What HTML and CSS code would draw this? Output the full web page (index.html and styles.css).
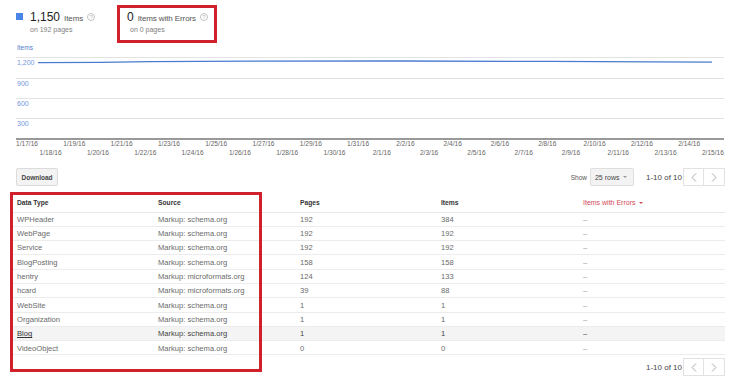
FILE: index.html
```html
<!DOCTYPE html>
<html>
<head>
<meta charset="utf-8">
<link rel="stylesheet" href="styles.css">
</head>
<body>
<div class="summary">
  <div class="stat stat-first">
    <div class="stat-row">
      <span class="swatch"></span>
      <div>
        <div class="stat-line"><span class="big">1,150</span><span class="stat-label">Items</span><span class="help">?</span></div>
        <div class="sub">on 192 pages</div>
      </div>
    </div>
  </div>
  <div class="stat stat-errors">
    <div class="stat-line"><span class="big">0</span><span class="stat-label">Items with Errors</span><span class="help">?</span></div>
    <div class="sub sub-indent">on 0 pages</div>
  </div>
</div>

<svg class="chart" width="738" height="125" viewBox="0 0 738 125">
  <text x="17" y="7" class="ytitle">Items</text>
  <g class="grid">
    <line x1="16" y1="14.5" x2="724" y2="14.5"/>
    <line x1="16" y1="35.5" x2="724" y2="35.5"/>
    <line x1="16" y1="55.5" x2="724" y2="55.5"/>
    <line x1="16" y1="75.5" x2="724" y2="75.5"/>
  </g>
  <line class="base" x1="16" y1="96" x2="724" y2="96"/>
  <g class="ylab">
    <text x="17" y="22">1,200</text>
    <text x="17" y="43">900</text>
    <text x="17" y="63">600</text>
    <text x="17" y="83">300</text>
  </g>
  <polyline class="data" points="38,19.6 100,19.4 150,18.6 250,18.1 400,18 550,18.4 650,18.9 712,19.2"/>
  <g class="xlab">
    <text x="27" y="103">1/17/16</text>
    <text x="50.6" y="112">1/18/16</text>
    <text x="74.3" y="103">1/19/16</text>
    <text x="97.9" y="112">1/20/16</text>
    <text x="121.6" y="103">1/21/16</text>
    <text x="145.3" y="112">1/22/16</text>
    <text x="168.9" y="103">1/23/16</text>
    <text x="192.6" y="112">1/24/16</text>
    <text x="216.2" y="103">1/25/16</text>
    <text x="239.9" y="112">1/26/16</text>
    <text x="263.5" y="103">1/27/16</text>
    <text x="287.2" y="112">1/28/16</text>
    <text x="310.8" y="103">1/29/16</text>
    <text x="334.5" y="112">1/30/16</text>
    <text x="358.1" y="103">1/31/16</text>
    <text x="381.8" y="112">2/1/16</text>
    <text x="405.4" y="103">2/2/16</text>
    <text x="429.1" y="112">2/3/16</text>
    <text x="452.7" y="103">2/4/16</text>
    <text x="476.4" y="112">2/5/16</text>
    <text x="500" y="103">2/6/16</text>
    <text x="523.7" y="112">2/7/16</text>
    <text x="547.3" y="103">2/8/16</text>
    <text x="571" y="112">2/9/16</text>
    <text x="594.6" y="103">2/10/16</text>
    <text x="618.3" y="112">2/11/16</text>
    <text x="641.9" y="103">2/12/16</text>
    <text x="665.6" y="112">2/13/16</text>
    <text x="689.2" y="103">2/14/16</text>
    <text x="712.9" y="112">2/15/16</text>
  </g>
</svg>

<div class="toolbar">
  <button class="btn-download">Download</button>
  <div class="pager">
    <span class="show">Show</span>
    <span class="rows">25 rows <span class="caret"></span></span>
    <span class="count">1-10 of 10</span>
    <span class="navs">
      <span class="nav"><svg width="6" height="9" viewBox="0 0 6 9"><polyline points="5,0.5 1,4.5 5,8.5"/></svg></span>
      <span class="nav"><svg width="6" height="9" viewBox="0 0 6 9"><polyline points="1,0.5 5,4.5 1,8.5"/></svg></span>
    </span>
  </div>
</div>

<div class="table-wrap">
  <table class="data-table">
    <colgroup>
      <col class="c1"><col class="c2"><col class="c3"><col class="c4"><col class="c5">
    </colgroup>
    <thead>
      <tr><th>Data Type</th><th>Source</th><th>Pages</th><th>Items</th><th class="err">Items with Errors <span class="caret red"></span></th></tr>
    </thead>
    <tbody>
      <tr><td>WPHeader</td><td>Markup: schema.org</td><td>192</td><td>384</td><td class="dash">–</td></tr>
      <tr><td>WebPage</td><td>Markup: schema.org</td><td>192</td><td>192</td><td class="dash">–</td></tr>
      <tr><td>Service</td><td>Markup: schema.org</td><td>192</td><td>192</td><td class="dash">–</td></tr>
      <tr><td>BlogPosting</td><td>Markup: schema.org</td><td>158</td><td>158</td><td class="dash">–</td></tr>
      <tr><td>hentry</td><td>Markup: microformats.org</td><td>124</td><td>133</td><td class="dash">–</td></tr>
      <tr><td>hcard</td><td>Markup: microformats.org</td><td>39</td><td>88</td><td class="dash">–</td></tr>
      <tr><td>WebSite</td><td>Markup: schema.org</td><td>1</td><td>1</td><td class="dash">–</td></tr>
      <tr><td>Organization</td><td>Markup: schema.org</td><td>1</td><td>1</td><td class="dash">–</td></tr>
      <tr class="hover"><td><span class="link">Blog</span></td><td>Markup: schema.org</td><td>1</td><td>1</td><td class="dash">–</td></tr>
      <tr><td>VideoObject</td><td>Markup: schema.org</td><td>0</td><td>0</td><td class="dash">–</td></tr>
    </tbody>
  </table>
  <div class="highlight"></div>
</div>

<div class="footer-pager">
  <span class="count">1-10 of 10</span>
  <span class="navs">
    <span class="nav"><svg width="6" height="9" viewBox="0 0 6 9"><polyline points="5,0.5 1,4.5 5,8.5"/></svg></span>
    <span class="nav"><svg width="6" height="9" viewBox="0 0 6 9"><polyline points="1,0.5 5,4.5 1,8.5"/></svg></span>
  </span>
</div>
</body>
</html>
```

FILE: styles.css
```css
* { box-sizing: border-box; }
html, body { margin: 0; padding: 0; background: #fff; }
body {
  width: 738px;
  height: 377px;
  overflow: hidden;
  font-family: "Liberation Sans", Arial, sans-serif;
  color: #333;
}

/* summary */
.summary {
  display: flex;
  align-items: flex-start;
  padding: 5px 0 0 16px;
  height: 43px;
}
.stat-first { width: 101px; padding-top: 5px; }
.stat-row { display: flex; align-items: flex-start; }
.swatch {
  width: 7px; height: 7px;
  background: #4a86e8;
  margin: 3px 7px 0 0;
  flex: none;
}
.stat-line { display: flex; align-items: baseline; height: 14px; line-height: 14px; white-space: nowrap; }
.big { font-size: 12px; color: #222; }
.stat-label { font-size: 8px; color: #555; margin-left: 4px; letter-spacing: -0.1px; }
.help {
  display: inline-flex; align-items: center; justify-content: center;
  width: 8px; height: 8px;
  border: 1px solid #c4c4c4; border-radius: 50%;
  font-size: 6px; line-height: 1; color: #b8b8b8;
  margin-left: 4px;
  align-self: center;
}
.sub { font-size: 7px; line-height: 8px; color: #808080; margin-top: 2px; white-space: nowrap; }
.sub-indent { padding-left: 3px; }
.stat-errors {
  width: 100px; height: 38px;
  border: 3px solid #d0202b;
  padding: 2px 0 0 7px;
}

/* chart */
.chart { display: block; }
.chart text { font-family: "Liberation Sans", Arial, sans-serif; }
.ytitle { font-size: 6.5px; fill: #4f7cc9; }
.grid line { stroke: #e3e3e3; stroke-width: 1; }
.base { stroke: #999; stroke-width: 2; }
.ylab text { font-size: 7px; fill: #7396db; }
.data { fill: none; stroke: #4a7bd0; stroke-width: 1.3; }
.xlab text { font-size: 6.6px; fill: #666; text-anchor: middle; }

/* toolbar */
.toolbar {
  display: flex;
  justify-content: space-between;
  align-items: center;
  height: 18px;
  padding: 0 13px 0 16px;
}
.btn-download {
  width: 42px; height: 18px;
  border: 1px solid #dcdcdc; border-radius: 2px;
  background: #f3f3f3;
  font-family: "Liberation Sans", Arial, sans-serif;
  font-size: 6.5px; font-weight: bold; color: #444;
  padding: 0;
}
.pager, .footer-pager { display: flex; align-items: center; height: 18px; }
.show { font-size: 6.5px; color: #555; margin-right: 3px; }
.rows {
  display: flex; align-items: center;
  width: 44px; height: 18px;
  background: #f3f3f3; border: 1px solid #dedede; border-radius: 2px;
  font-size: 7px; color: #444; padding-left: 4px;
}
.caret {
  display: inline-block; width: 0; height: 0;
  border-left: 2px solid transparent; border-right: 2px solid transparent;
  border-top: 2.5px solid #999;
  margin-left: 4px;
}
.caret.red { border-top-color: #d04a55; margin-left: 2px; vertical-align: middle; }
.count { font-size: 8px; color: #444; margin-left: 12px; margin-right: 1px; white-space: nowrap; }
.navs { display: flex; }
.nav {
  display: flex; align-items: center; justify-content: center;
  width: 21px; height: 18px;
  border: 1px solid #e2e2e2; background: #fff;
}
.nav + .nav { border-left: none; }
.nav polyline { fill: none; stroke: #aaa; stroke-width: 1; }

/* table */
.table-wrap {
  position: relative;
  margin-top: 7px;
  padding: 0 13px 0 12px;
}
.data-table {
  width: 713px;
  border-collapse: collapse;
  table-layout: fixed;
}
.c1 { width: 141px; } .c2 { width: 142px; } .c3 { width: 141px; } .c4 { width: 142px; } .c5 { width: 147px; }
.data-table th {
  height: 19px;
  text-align: left;
  font-size: 6.7px; font-weight: bold; color: #333;
  padding: 0 0 0 5px;
  border-bottom: 1px solid #e8e8e8;
  white-space: nowrap;
}
.data-table th.err { color: #d04a55; font-weight: normal; font-size: 7px; }
.data-table td {
  height: 14.3px;
  font-size: 7.6px; color: #6a6a6a;
  padding: 1px 0 0 5px;
  border-bottom: 1px solid #ececec;
  white-space: nowrap;
  line-height: 1;
}
.data-table td.dash { color: #999; }
.data-table tr.hover td { background: #f4f4f4; color: #444; }
.link { text-decoration: underline; color: #333; }
.highlight {
  position: absolute;
  left: 10px; top: -1px;
  width: 252px; height: 180px;
  border: 3px solid #d0202b;
  pointer-events: none;
}

.footer-pager {
  justify-content: flex-end;
  padding-right: 13px;
  margin-top: 3px;
}
```
